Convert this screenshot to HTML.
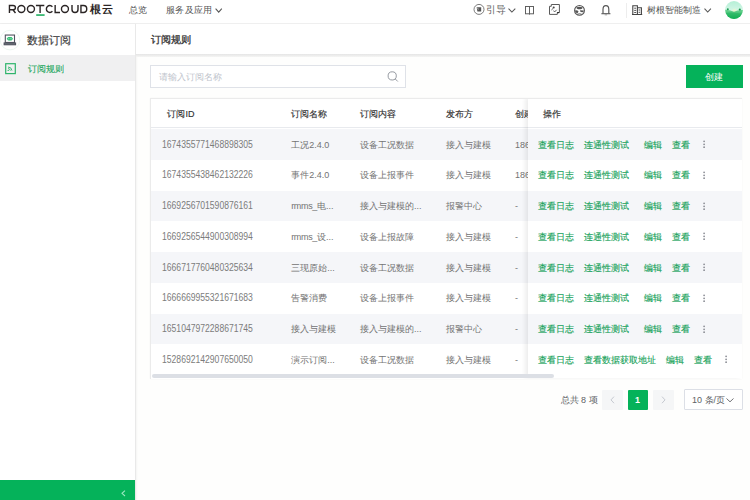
<!DOCTYPE html>
<html><head><meta charset="utf-8">
<style>
*{margin:0;padding:0;box-sizing:border-box}
html,body{width:750px;height:500px;overflow:hidden;background:#fefefd;font-family:"Liberation Sans",sans-serif;font-size:9px;color:#737373}
svg{position:absolute;overflow:visible}
#hdr{position:absolute;left:0;top:0;width:750px;height:24px;background:#fff;border-bottom:1px solid #efefef}
#side{position:absolute;left:0;top:24px;width:136px;height:476px;background:#fff;border-right:1px solid #e9e9e9;box-shadow:1px 0 1.5px rgba(0,0,0,.04)}
#titlebar{position:absolute;left:136px;top:24px;width:614px;height:30px;background:#fff}
#shade{position:absolute;left:136px;top:54px;width:614px;height:3px;background:linear-gradient(#e5e5e5,#f5f5f4)}
.t{position:absolute;white-space:nowrap;line-height:12px}
.hd{color:#333;-webkit-text-stroke:0.15px #333}
.g{color:#14a158;-webkit-text-stroke:0.12px #14a158}
#tbl{position:absolute;left:150px;top:98px;width:592px;height:281px;background:#fff;box-shadow:0 0 1.5px rgba(0,0,0,.05);overflow:hidden}
#tbl::after{content:"";position:absolute;left:0;top:0;width:592px;height:281px;border:1px solid #ebebeb;pointer-events:none}
.hrow{position:absolute;left:0;top:0;width:592px;height:30px;background:#fff;border-bottom:1px solid #e8eaee}
.row{position:absolute;left:0;width:592px;height:30.75px}
.odd{background:#f5f6f9}.even{background:#fff}
.c{position:absolute;top:1px;white-space:nowrap;line-height:30px}
.row .c{line-height:30.75px;top:0.6px}
.id{color:#7c7c7c;left:12.2px;font-size:10px;transform:scaleX(0.86);transform-origin:0 50%}
#fix{position:absolute;left:377.6px;top:0;width:214px;height:280px;box-shadow:-3px 0 4px rgba(0,0,0,.07)}
.dots{position:absolute;top:11px;fill:#858890}
#sb{position:absolute;left:2px;top:276px;width:402px;height:4px;border-radius:2px;background:#dcdfe5}
.pg{position:absolute;top:389.5px;width:20.5px;height:20.5px;background:#f5f6f7;border-radius:1px}
</style></head><body>
<div id="hdr">
  <svg style="left:0;top:0" width="120" height="20"><g fill="none" stroke="#2b2525" stroke-width="1.4"><path d="M9.45 13 V5.55 H13 Q15.4 5.55 15.4 7.7 Q15.4 9.8 13 9.8 H9.45 M12.9 9.8 L15.5 13"/><ellipse cx="21.35" cy="9" rx="3.5" ry="3.45"/><ellipse cx="30.95" cy="9" rx="3.5" ry="3.45"/><path d="M35.9 5.55 H44.3 M40.1 5.55 V13"/><path d="M52.4 6.7 A3.45 3.45 0 1 0 52.4 11.3"/><path d="M55.15 5 V12.45 H60"/><ellipse cx="64.95" cy="9" rx="3.5" ry="3.45"/><path d="M72 5 V9.4 Q72 12.45 75 12.45 Q78 12.45 78 9.4 V5"/><path d="M80.95 5.55 V12.45 H83.4 Q86.75 12.45 86.75 9 Q86.75 5.55 83.4 5.55 Z"/></g><rect x="36.2" y="14.3" width="8.4" height="1.5" fill="#10a955"/></svg>
  <div class="t" style="left:89.6px;top:3.2px;font-size:11px;line-height:13px;color:#2b2525;font-weight:bold;letter-spacing:1.7px">根云</div>
  <div class="t" style="left:129px;top:4px;color:#555">总览</div>
  <div class="t" style="left:166px;top:4px;color:#555;letter-spacing:0.3px">服务及应用</div>
  <svg style="left:214.8px;top:7.8px" width="8" height="5"><path d="M0.6 0.6 L3.7 4.1 L6.8 0.6" fill="none" stroke="#555" stroke-width="1.05"/></svg>
  <!-- guide icon -->
  <svg style="left:473px;top:4px" width="12" height="11"><circle cx="6" cy="5.4" r="5" fill="none" stroke="#666" stroke-width="0.85"/><path d="M3.6 3.3 H8.2 V7.6 H4.4 Z" fill="#555"/><path d="M4.6 3.9 L5.3 5.6" stroke="#ddd" stroke-width="0.7"/></svg>
  <div class="t" style="left:486px;top:3.5px;color:#666;font-size:10px;letter-spacing:0.4px">引导</div>
  <svg style="left:508px;top:7.5px" width="8" height="5"><path d="M0.5 0.6 L3.9 4 L7.3 0.6" fill="none" stroke="#555" stroke-width="1.05"/></svg>
  <!-- book -->
  <svg style="left:525px;top:6px" width="9" height="9"><rect x="0.5" y="0.5" width="8" height="7.3" fill="none" stroke="#5a5a5a" stroke-width="0.95"/><path d="M4.5 0.5 V8.6" stroke="#5a5a5a" stroke-width="0.95"/></svg>
  <!-- swap image -->
  <svg style="left:549px;top:4px" width="12" height="11"><path d="M0.5 2.3 H2.3 V0.5 H10.4 V8.5 H8.3 V10.4 H0.5 Z" fill="none" stroke="#5a5a5a" stroke-width="1"/><circle cx="4.7" cy="3.6" r="1" fill="#444"/><path d="M2.4 6 L4.1 4.4 M4.6 6.6 L5.6 8 L7.6 5.8" fill="none" stroke="#555" stroke-width="0.9"/><rect x="8.2" y="8.1" width="2" height="1.1" fill="#222"/></svg>
  <!-- globe -->
  <svg style="left:574px;top:5px" width="11" height="11"><circle cx="5.5" cy="5.4" r="4.9" fill="#fff" stroke="#555" stroke-width="1.1"/><path d="M2.2 2.6 Q5.5 1 8.8 2.6 L8 3.8 Q5.5 4.8 3 3.8 Z" fill="#555"/><path d="M1 5.5 Q3 5 4.5 6.2 L3.6 8.2 Q2 8 1.3 7 Z" fill="#555"/><path d="M6 5.3 L9.8 5.6 L9.4 7.2 L6.6 7 Z" fill="#555"/><path d="M3.3 9.3 Q5.5 8.2 7.7 9.3" fill="none" stroke="#555" stroke-width="0.9"/></svg>
  <!-- bell -->
  <svg style="left:600.5px;top:5px" width="10" height="11"><path d="M2 8.6 V4.4 Q2 0.6 4.9 0.6 Q7.8 0.6 7.8 4.4 V8.6" fill="none" stroke="#555" stroke-width="1.15"/><path d="M0.4 8.7 H9.4" stroke="#555" stroke-width="1.1"/><rect x="3.7" y="9.3" width="2.4" height="1" fill="#999"/></svg>
  <div style="position:absolute;left:626px;top:2.6px;width:1px;height:15px;background:#ededed"></div>
  <!-- building -->
  <svg style="left:631.5px;top:5px" width="11" height="10"><path d="M0.8 9.5 V0.7 H5.4 V9.5 M5.4 2.8 H9.4 V9.5 M0 9.5 H10.2" fill="none" stroke="#444" stroke-width="1.1"/><path d="M2.2 3.2 H4.2 M2.2 5.4 H4.2 M2.2 7.5 H4.2 M6.6 5 H8.2 M6.6 7.3 H8.2" stroke="#444" stroke-width="0.9"/></svg>
  <div class="t" style="left:647px;top:4px;color:#555">树根智能制造</div>
  <svg style="left:704px;top:7.8px" width="8" height="5"><path d="M0.5 0.6 L3.7 4 L6.9 0.6" fill="none" stroke="#555" stroke-width="1.05"/></svg>
  <!-- avatar -->
  <svg style="left:724.5px;top:1px" width="18" height="18"><defs><linearGradient id="sky" x1="0" y1="0" x2="0" y2="1"><stop offset="0" stop-color="#b5efd6"/><stop offset="1" stop-color="#eefcf5"/></linearGradient><linearGradient id="av" x1="0" y1="0" x2="0" y2="1"><stop offset="0" stop-color="#6fd494"/><stop offset="1" stop-color="#06a849"/></linearGradient><radialGradient id="sun" cx="0.5" cy="0.5" r="0.5"><stop offset="0" stop-color="#f3f7c8"/><stop offset="1" stop-color="#f3f7c8" stop-opacity="0"/></radialGradient><clipPath id="avc"><circle cx="9" cy="9" r="8.9"/></clipPath></defs><g clip-path="url(#avc)"><rect width="18" height="18" fill="url(#sky)"/><circle cx="9.5" cy="10" r="3" fill="url(#sun)"/><path d="M0 8.8 Q4 8.6 9 10.8 Q13 8.6 18 9 V18 H0 Z" fill="url(#av)"/><path d="M0 12 Q8 10.5 18 13 V18 H0Z" fill="#1db45c" opacity=".5"/><circle cx="2.8" cy="8.3" r="1" fill="#1f9a55"/><circle cx="14.8" cy="8.6" r="1.1" fill="#1f9a55"/></g></svg>
</div>
<div id="side">
  <svg style="left:0;top:5.5px" width="21" height="21"><circle cx="10" cy="10.1" r="9.8" fill="#fff" stroke="#e6f5ec" stroke-width="0.8"/><rect x="5.3" y="5.05" width="9.2" height="7.4" fill="none" stroke="#50555f" stroke-width="1.1"/><rect x="3.6" y="12.4" width="12.5" height="2.9" fill="#50555f"/><path d="M4.6 13.9 H15.1" stroke="#8a8f98" stroke-width="0.5"/><path d="M6.6 8.7 L8.1 7 H11.6 L13.1 8.7 L11.6 10.4 H8.1 Z" fill="#3cc47c"/><path d="M8.3 8.7 H11.4" stroke="#e9fff2" stroke-width="0.6"/><rect x="9.5" y="7.2" width="0.8" height="3" fill="#23b063"/></svg>
  <div class="t" style="left:27px;top:9.9px;font-size:10.5px;line-height:13px;color:#3a3a3a;-webkit-text-stroke:0.15px #3a3a3a">数据订阅</div>
  <div style="position:absolute;left:0;top:31px;width:135px;height:25.5px;background:#f0f0f1"></div>
  <svg style="left:4.6px;top:38.6px" width="11" height="11"><rect x="0.7" y="0.7" width="9.6" height="9.9" fill="none" stroke="#2fb46c" stroke-width="1.2"/><path d="M3 4 Q6.5 4 7 7.6 M3 5.6 Q5 5.6 5.4 7.6" fill="none" stroke="#2fb46c" stroke-width="0.9"/><rect x="2.6" y="7" width="1.2" height="1" fill="#2fb46c"/></svg>
  <div class="t g" style="left:28px;top:39.1px;color:#2bab63">订阅规则</div>
  <div style="position:absolute;left:0;top:456px;width:135px;height:20px;background:#05b25a"></div>
  <svg style="left:121px;top:465.5px" width="5" height="7"><path d="M4 0.6 L1 3.3 L4 6" fill="none" stroke="#9be8c0" stroke-width="1.1"/></svg>
</div>
<div id="titlebar">
  <div class="t" style="left:15px;top:9px;font-size:10.2px;line-height:13px;color:#333;-webkit-text-stroke:0.3px #333">订阅规则</div>
</div>
<div id="shade"></div>
<!-- search -->
<div style="position:absolute;left:150px;top:65px;width:256px;height:23px;border:1px solid #dfe2e8;background:#fff"></div>
<div class="t" style="left:159px;top:70.5px;color:#c0c4cc">请输入订阅名称</div>
<svg style="left:386.5px;top:70.5px" width="12" height="12"><circle cx="5.2" cy="4.9" r="4.1" fill="none" stroke="#8a8e96" stroke-width="0.9"/><path d="M8.2 7.9 L10.8 10.5" stroke="#8a8e96" stroke-width="0.9"/></svg>
<div style="position:absolute;left:686px;top:65px;width:56.5px;height:23px;background:#05b25a"></div>
<div class="t" style="left:705px;top:70.5px;color:#fff">创建</div>
<!-- table -->
<div id="tbl">
<div class="hrow"><span class="c hd" style="left:17.4px">订阅ID</span><span class="c hd" style="left:141.2px">订阅名称</span><span class="c hd" style="left:210px">订阅内容</span><span class="c hd" style="left:296px">发布方</span><span class="c hd" style="left:365.2px">创建</span></div>
<div class="row odd" style="top:31.0px"><span class="c id">1674355771468898305</span><span class="c" style="left:141.2px">工况2.4.0</span><span class="c" style="left:210px">设备工况数据</span><span class="c" style="left:296px">接入与建模</span><span class="c" style="left:365px">186</span></div>
<div class="row even" style="top:61.75px"><span class="c id">1674355438462132226</span><span class="c" style="left:141.2px">事件2.4.0</span><span class="c" style="left:210px">设备上报事件</span><span class="c" style="left:296px">接入与建模</span><span class="c" style="left:365px">186</span></div>
<div class="row odd" style="top:92.5px"><span class="c id">1669256701590876161</span><span class="c" style="left:141.2px"><span style="letter-spacing:-0.35px">rmms_</span>电...</span><span class="c" style="left:210px">接入与建模的...</span><span class="c" style="left:296px">报警中心</span><span class="c" style="left:365px">-</span></div>
<div class="row even" style="top:123.25px"><span class="c id">1669256544900308994</span><span class="c" style="left:141.2px"><span style="letter-spacing:-0.35px">rmms_</span>设...</span><span class="c" style="left:210px">设备上报故障</span><span class="c" style="left:296px">接入与建模</span><span class="c" style="left:365px">-</span></div>
<div class="row odd" style="top:154.0px"><span class="c id">1666717760480325634</span><span class="c" style="left:141.2px">三现原始...</span><span class="c" style="left:210px">设备工况数据</span><span class="c" style="left:296px">接入与建模</span><span class="c" style="left:365px">-</span></div>
<div class="row even" style="top:184.75px"><span class="c id">1666669955321671683</span><span class="c" style="left:141.2px">告警消费</span><span class="c" style="left:210px">设备上报事件</span><span class="c" style="left:296px">接入与建模</span><span class="c" style="left:365px">-</span></div>
<div class="row odd" style="top:215.5px"><span class="c id">1651047972288671745</span><span class="c" style="left:141.2px">接入与建模</span><span class="c" style="left:210px">接入与建模的...</span><span class="c" style="left:296px">报警中心</span><span class="c" style="left:365px">-</span></div>
<div class="row even" style="top:246.25px"><span class="c id">1528692142907650050</span><span class="c" style="left:141.2px">演示订阅...</span><span class="c" style="left:210px">设备工况数据</span><span class="c" style="left:296px">接入与建模</span><span class="c" style="left:365px">-</span></div>
<div id="fix">
<div class="hrow" style="width:214px"><span class="c hd" style="left:15.6px">操作</span></div>
<div class="row odd" style="top:31.0px;width:214px"><span class="c g" style="left:10px">查看日志</span><span class="c g" style="left:56.5px">连通性测试</span><span class="c g" style="left:116px">编辑</span><span class="c g" style="left:144px">查看</span><svg class="dots" style="left:175.5px" width="3" height="10"><circle cx="1.1" cy="1.3" r="0.85"/><circle cx="1.1" cy="4.3" r="0.85"/><circle cx="1.1" cy="7.2" r="0.85"/></svg></div>
<div class="row even" style="top:61.75px;width:214px"><span class="c g" style="left:10px">查看日志</span><span class="c g" style="left:56.5px">连通性测试</span><span class="c g" style="left:116px">编辑</span><span class="c g" style="left:144px">查看</span><svg class="dots" style="left:175.5px" width="3" height="10"><circle cx="1.1" cy="1.3" r="0.85"/><circle cx="1.1" cy="4.3" r="0.85"/><circle cx="1.1" cy="7.2" r="0.85"/></svg></div>
<div class="row odd" style="top:92.5px;width:214px"><span class="c g" style="left:10px">查看日志</span><span class="c g" style="left:56.5px">连通性测试</span><span class="c g" style="left:116px">编辑</span><span class="c g" style="left:144px">查看</span><svg class="dots" style="left:175.5px" width="3" height="10"><circle cx="1.1" cy="1.3" r="0.85"/><circle cx="1.1" cy="4.3" r="0.85"/><circle cx="1.1" cy="7.2" r="0.85"/></svg></div>
<div class="row even" style="top:123.25px;width:214px"><span class="c g" style="left:10px">查看日志</span><span class="c g" style="left:56.5px">连通性测试</span><span class="c g" style="left:116px">编辑</span><span class="c g" style="left:144px">查看</span><svg class="dots" style="left:175.5px" width="3" height="10"><circle cx="1.1" cy="1.3" r="0.85"/><circle cx="1.1" cy="4.3" r="0.85"/><circle cx="1.1" cy="7.2" r="0.85"/></svg></div>
<div class="row odd" style="top:154.0px;width:214px"><span class="c g" style="left:10px">查看日志</span><span class="c g" style="left:56.5px">连通性测试</span><span class="c g" style="left:116px">编辑</span><span class="c g" style="left:144px">查看</span><svg class="dots" style="left:175.5px" width="3" height="10"><circle cx="1.1" cy="1.3" r="0.85"/><circle cx="1.1" cy="4.3" r="0.85"/><circle cx="1.1" cy="7.2" r="0.85"/></svg></div>
<div class="row even" style="top:184.75px;width:214px"><span class="c g" style="left:10px">查看日志</span><span class="c g" style="left:56.5px">连通性测试</span><span class="c g" style="left:116px">编辑</span><span class="c g" style="left:144px">查看</span><svg class="dots" style="left:175.5px" width="3" height="10"><circle cx="1.1" cy="1.3" r="0.85"/><circle cx="1.1" cy="4.3" r="0.85"/><circle cx="1.1" cy="7.2" r="0.85"/></svg></div>
<div class="row odd" style="top:215.5px;width:214px"><span class="c g" style="left:10px">查看日志</span><span class="c g" style="left:56.5px">连通性测试</span><span class="c g" style="left:116px">编辑</span><span class="c g" style="left:144px">查看</span><svg class="dots" style="left:175.5px" width="3" height="10"><circle cx="1.1" cy="1.3" r="0.85"/><circle cx="1.1" cy="4.3" r="0.85"/><circle cx="1.1" cy="7.2" r="0.85"/></svg></div>
<div class="row even" style="top:246.25px;width:214px"><span class="c g" style="left:10px">查看日志</span><span class="c g" style="left:56px">查看数据获取地址</span><span class="c g" style="left:138.4px">编辑</span><span class="c g" style="left:166px">查看</span><svg class="dots" style="left:197.5px" width="3" height="10"><circle cx="1.1" cy="1.3" r="0.85"/><circle cx="1.1" cy="4.3" r="0.85"/><circle cx="1.1" cy="7.2" r="0.85"/></svg></div>
</div>
<div id="sb"></div>
</div>
<!-- pagination -->
<div class="t" style="left:560.5px;top:393.5px;color:#606266">总共 8 项</div>
<div class="pg" style="left:602px"></div>
<svg style="left:609.5px;top:396px" width="5" height="8"><path d="M4 0.6 L1 3.9 L4 7.2" fill="none" stroke="#c0c4cc" stroke-width="0.9"/></svg>
<div class="pg" style="left:627.5px;background:#05b25a"></div>
<div class="t" style="left:635px;top:393.5px;color:#fff;font-weight:bold">1</div>
<div class="pg" style="left:653px"></div>
<svg style="left:661px;top:396px" width="5" height="8"><path d="M1 0.6 L4 3.9 L1 7.2" fill="none" stroke="#c0c4cc" stroke-width="0.9"/></svg>
<div style="position:absolute;left:684px;top:389px;width:58.5px;height:21px;border:1px solid #dcdfe6;background:#fff;border-radius:1px"></div>
<div class="t" style="left:692px;top:393.5px;color:#606266">10 条/页</div>
<svg style="left:725.5px;top:397.5px" width="8" height="5"><path d="M0.5 0.5 L4 3.8 L7.5 0.5" fill="none" stroke="#606266" stroke-width="0.9"/></svg>
</body></html>
